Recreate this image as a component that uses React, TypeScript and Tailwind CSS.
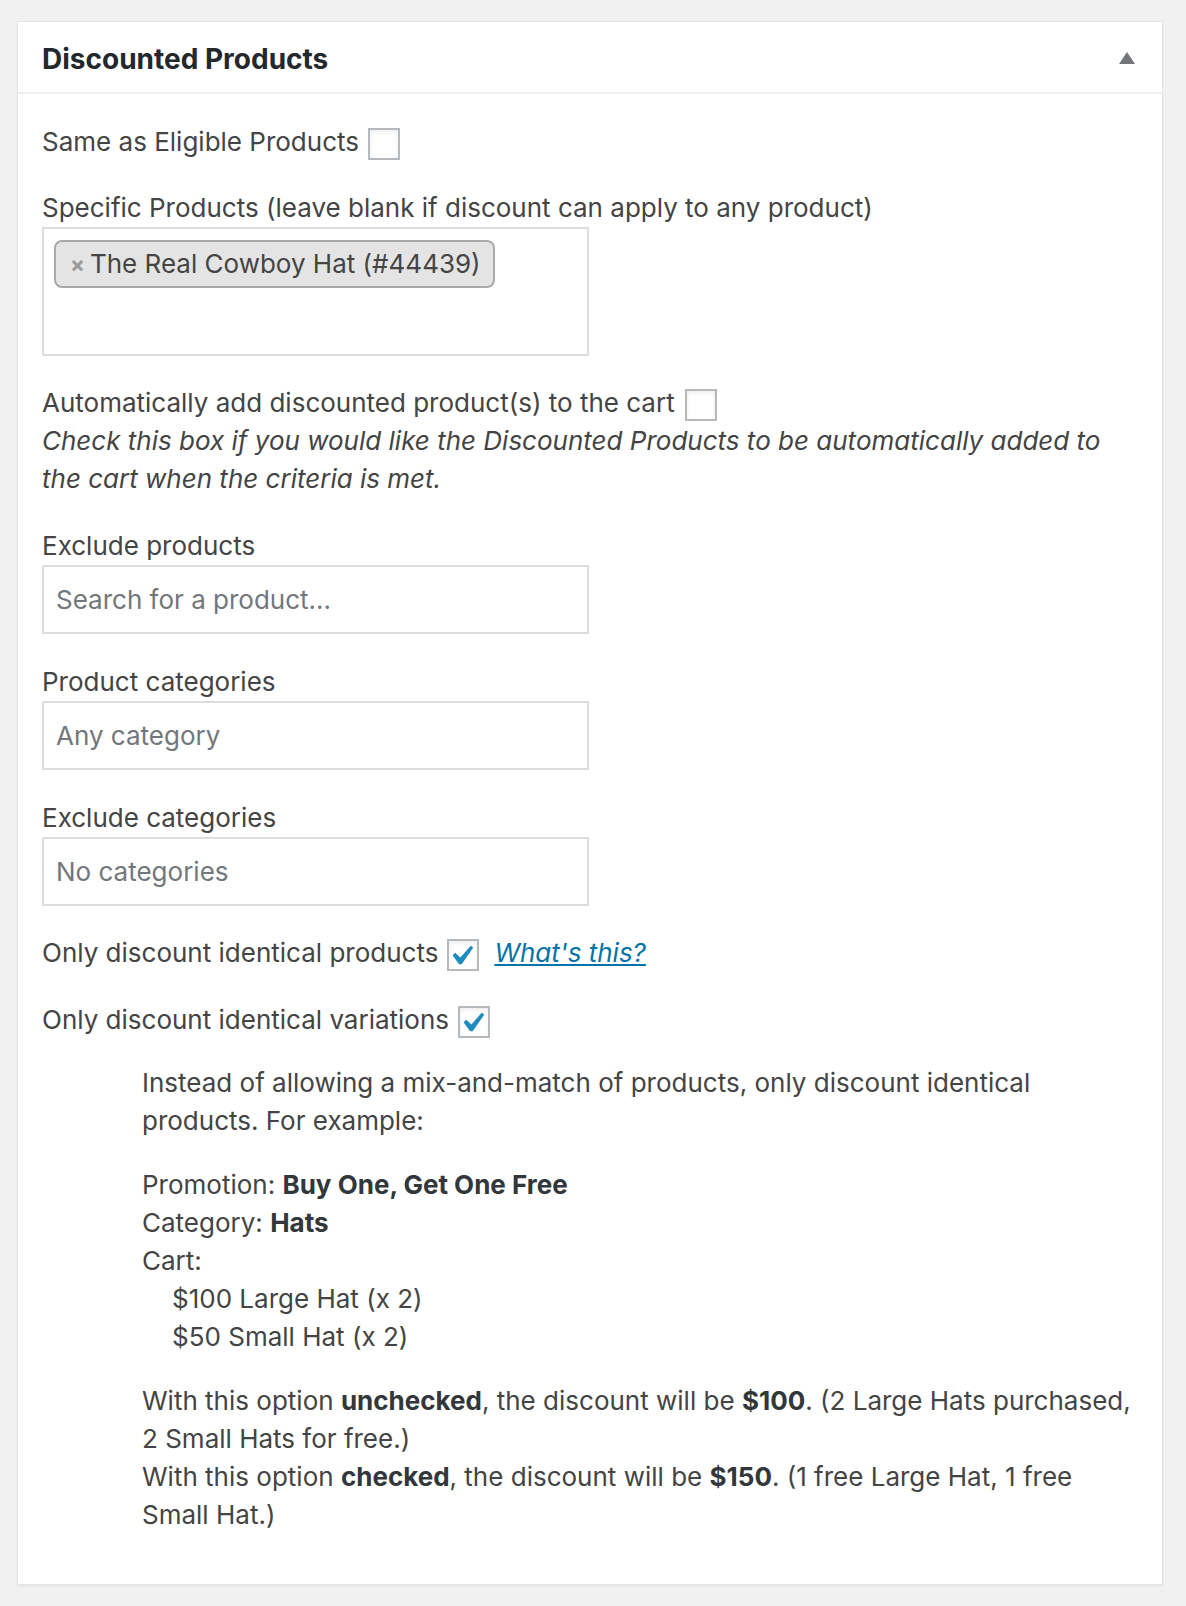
import React from 'react';

const font = { fontFamily: 'Inter, "Noto Sans", sans-serif' };

const Checkbox: React.FC<{ checked?: boolean }> = ({ checked }) => (
    <span className="inline-flex items-center justify-center w-[32px] h-[32px] border-2 border-[#b4b9be] bg-white shadow-[inset_0_2px_4px_rgba(0,0,0,0.07)] align-middle shrink-0">
        {checked && (
            <svg viewBox="4 2.55 14 14" className="w-[28px] h-[28px]" fill="#1e8cbe">
                <path d="M14.83 4.89l1.34.94-5.81 8.38H9.02L5.78 9.67l1.34-1.25 2.57 2.4z" />
            </svg>
        )}
    </span>
);

const TextBox: React.FC<{ placeholder: string }> = ({ placeholder }) => (
    <div className="w-[547px] h-[69px] border-2 border-[#dddddd] bg-white flex items-center px-[12px] text-[#72777c]">
        {placeholder}
    </div>
);

const App: React.FC = () => {
    return (
        <div className="min-h-screen bg-[#f1f1f1] pt-[21px] px-[17px] pb-[22px]" style={font}>
            <div className="w-[1146px] bg-white border border-[#e5e5e5] shadow-[0_2px_2px_rgba(0,0,0,0.04)]">
                <div className="flex items-center justify-between h-[72px] px-[24px] border-b-2 border-[#eeeeee]">
                    <h2 className="mt-[4px] text-[28px] leading-[39px] font-bold text-[#23282d]">Discounted Products</h2>
                    <svg viewBox="0 0 16 12" className="w-[16px] h-[12px] mr-[3px] mt-[2px]" fill="#72777c">
                        <polygon points="8,0 16,12 0,12" />
                    </svg>
                </div>

                <div className="px-[24px] pt-[29px] pb-[50px] text-[26px] leading-[38px] text-[#444444]">
                    <div className="flex items-center">
                        <span>Same as Eligible Products</span>
                        <span className="ml-[9px]"><Checkbox /></span>
                    </div>

                    <div className="mt-[28px]">Specific Products (leave blank if discount can apply to any product)</div>
                    <div className="w-[547px] h-[129px] border-2 border-[#dddddd] bg-white pt-[11px] pl-[10px]">
                        <span className="inline-flex items-center h-[48px] pl-[14px] pr-[12px] bg-[#e4e4e4] border-2 border-[#aaaaaa] rounded-[8px] text-[#444444]">
                            <span className="text-[#999999] font-bold text-[22px] mr-[5px]">×</span>
                            The Real Cowboy Hat (#44439)
                        </span>
                    </div>

                    <div className="mt-[28px] flex items-center">
                        <span>Automatically add discounted product(s) to the cart</span>
                        <span className="ml-[10px]"><Checkbox /></span>
                    </div>
                    <div className="italic">
                        Check this box if you would like the Discounted Products to be automatically added to the cart when the criteria is met.
                    </div>

                    <div className="mt-[29px]">Exclude products</div>
                    <TextBox placeholder="Search for a product…" />

                    <div className="mt-[29px]">Product categories</div>
                    <TextBox placeholder="Any category" />

                    <div className="mt-[29px]">Exclude categories</div>
                    <TextBox placeholder="No categories" />

                    <div className="mt-[28px] flex items-center">
                        <span>Only discount identical products</span>
                        <span className="ml-[9px]"><Checkbox checked /></span>
                        <a href="#" className="ml-[15px] italic text-[#0073aa] underline">What's this?</a>
                    </div>

                    <div className="mt-[29px] flex items-center">
                        <span>Only discount identical variations</span>
                        <span className="ml-[9px]"><Checkbox checked /></span>
                    </div>

                    <div className="ml-[100px] mt-[25px]">
                        <p>Instead of allowing a mix-and-match of products, only discount identical products. For example:</p>
                        <p className="mt-[26px]">
                            Promotion: <strong className="font-bold text-[#32373c]">Buy One, Get One Free</strong>
                        </p>
                        <p>
                            Category: <strong className="font-bold text-[#32373c]">Hats</strong>
                        </p>
                        <p>Cart:</p>
                        <p className="pl-[30px]">$100 Large Hat (x 2)</p>
                        <p className="pl-[30px]">$50 Small Hat (x 2)</p>
                        <p className="mt-[26px]">
                            With this option <strong className="font-bold text-[#32373c]">unchecked</strong>, the discount will be{' '}
                            <strong className="font-bold text-[#32373c]">$100</strong>. (2 Large Hats purchased, 2 Small Hats for free.)
                        </p>
                        <p>
                            With this option <strong className="font-bold text-[#32373c]">checked</strong>, the discount will be{' '}
                            <strong className="font-bold text-[#32373c]">$150</strong>. (1 free Large Hat, 1 free Small Hat.)
                        </p>
                    </div>
                </div>
            </div>
        </div>
    );
};

export default App;
